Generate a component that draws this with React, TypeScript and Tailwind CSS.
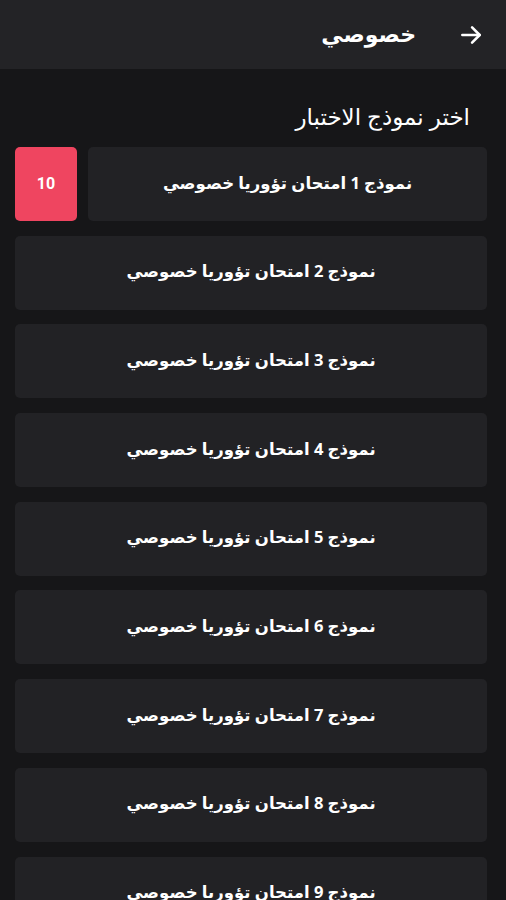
import React from "react";

const font = { fontFamily: '"Noto Sans", "DejaVu Sans", "Noto Sans Arabic", sans-serif' };

export default function App() {
  const items = [1, 2, 3, 4, 5, 6, 7, 8, 9];
  return (
    <div dir="rtl" style={font} className="w-[506px] h-[900px] overflow-hidden bg-[#161618] text-white">
      <div className="h-[69px] bg-[#232326] flex items-center px-[22px] gap-[42px]">
        <svg width="26" height="26" viewBox="0 0 24 24" fill="none" stroke="white" strokeWidth="2.4" strokeLinecap="round" strokeLinejoin="round">
          <path d="M4 12h16" />
          <path d="M13 5l7 7-7 7" />
        </svg>
        <span className="text-[22px] font-semibold leading-none pb-[4px]">خصوصي</span>
      </div>
      <div className="px-[19px] pt-[29px] pb-[13px] pr-[36px]">
        <h1 className="text-[23px] leading-[36px] font-normal">اختر نموذج الاختبار</h1>
      </div>
      <div className="flex flex-col gap-[14.7px] pr-[19px] pl-[15px]">
        {items.map((n) => (
          <div key={n} className="flex gap-[11px] h-[74px]">
            <div className="flex-1 rounded-[5px] bg-[#222225] flex items-center justify-center">
              <span className="text-[16.5px] font-bold pb-[2px]">{`نموذج ${n} امتحان تؤوريا خصوصي`}</span>
            </div>
            {n === 1 && (
              <div className="w-[62px] rounded-[5px] bg-[#ef4560] flex items-center justify-center">
                <span className="text-[16px] font-bold" style={{ fontFamily: 'Roboto, sans-serif' }}>10</span>
              </div>
            )}
          </div>
        ))}
      </div>
    </div>
  );
}
